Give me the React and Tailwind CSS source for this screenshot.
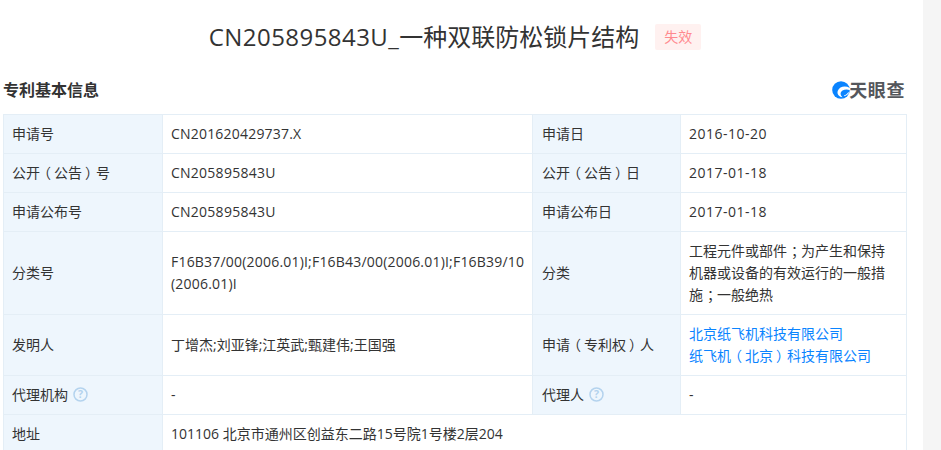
const F = "font-['Open_Sans','Noto_Sans_CJK_SC',sans-serif]";

function Help() {
  return (
    <svg width="15" height="15" viewBox="0 0 15 15" className="ml-[5px] inline-block align-[-2px]">
      <circle cx="7.5" cy="7.5" r="6.5" fill="none" stroke="#b4d3ee" strokeWidth="1.5" />
      <text x="7.5" y="11.2" textAnchor="middle" fontSize="10.500" fontWeight="700" fill="#b4d3ee" fontFamily="Open Sans, sans-serif">?</text>
    </svg>
  );
}

const LP = () => <span className="ml-[-3px] mr-[3px]">（</span>;
const RP = () => <span className="ml-[3px] mr-[-3px]">）</span>;
const Semi = () => <span className="ml-[4px] mr-[-4px]">；</span>;

const L = ({ children, first }) => (
  <td className={`border border-[#e4eef6] bg-[#eef6fd] py-0 align-middle ${first ? "px-[8px]" : "px-[9px]"}`}>{children}</td>
);
const V = ({ children, colSpan }) => (
  <td colSpan={colSpan} className="border border-[#e4eef6] px-[8px] py-0 align-middle">{children}</td>
);

const rows = [
  ["申请号", <span className="tracking-[0.2px]">CN201620429737.X</span>, "申请日", "2016-10-20"],
  [<>公开<LP />公告<RP />号</>, <span className="tracking-[0.25px]">CN205895843U</span>, <>公开<LP />公告<RP />日</>, "2017-01-18"],
  ["申请公布号", <span className="tracking-[0.25px]">CN205895843U</span>, "申请公布日", "2017-01-18"],
];

export default function App() {
  return (
    <div className={`${F} flex h-[450px] w-[941px] overflow-hidden bg-white text-[14px] text-[#333333]`}>
      <main className="w-[923px] shrink-0 pl-[3px] pr-[16px]">
        <div className="flex h-[73px] items-center justify-center gap-[16px]">
          <h1 className="text-[24px] leading-[32px] font-normal text-[#333333]">
            <span className="tracking-[0.45px]">CN205895843U_</span>一种双联防松锁片结构
          </h1>
          <span className="flex h-[26px] w-[46px] items-center justify-center rounded-[2px] bg-[#fff1f0] text-[14px] text-[#ff8a8f]">失效</span>
        </div>
        <div className="flex h-[33px] items-center justify-between pr-[2px]">
          <h2 className="text-[16px] font-bold text-[#333333]">专利基本信息</h2>
          <div className="flex items-center">
            <svg width="18" height="18" viewBox="0 0 18 18">
              <circle cx="9" cy="9" r="8.800" fill="#0a84ff" />
              <path d="M18 7C13 4.300 7.500 5.600 5.800 9.800 4.600 13 6.800 15.900 10.500 16.200 8 14.300 8 11.200 10.500 9.600 12.700 8.300 15.500 8.200 18 9.200z" fill="#ffffff" />
              <path d="M12 14.500c1.800-.6 3.300-1.800 4.300-3.500l.7 1c-1 1.500-2.800 2.900-5 3.300z" fill="#ffffff" />
            </svg>
            <span className="ml-[-1px] text-[18px] leading-[20px] font-bold tracking-[0.6px] text-[#54575c]">天眼查</span>
          </div>
        </div>
        <div className="h-[8px]" />
        <table className="w-[903px] table-fixed border-collapse leading-[22px]">
          <colgroup>
            <col className="w-[159px]" />
            <col className="w-[370px]" />
            <col className="w-[148px]" />
            <col className="w-[226px]" />
          </colgroup>
          <tbody>
            {rows.map((r, i) => (
              <tr key={i} className="h-[39px]">
                <L first>{r[0]}</L>
                <V>{r[1]}</V>
                <L>{r[2]}</L>
                <V><span className="tracking-[0.5px]">{r[3]}</span></V>
              </tr>
            ))}
            <tr className="h-[83px]">
              <L first>分类号</L>
              <V><span className="tracking-[0.2px]">F16B37/00(2006.01)I;F16B43/00(2006.01)I;F16B39/10<wbr />(2006.01)I</span></V>
              <L>分类</L>
              <V>工程元件或部件<Semi />为产生和保持机器或设备的有效运行的一般措施<Semi />一般绝热</V>
            </tr>
            <tr className="h-[61px]">
              <L first>发明人</L>
              <V>丁增杰;刘亚锋;江英武;甄建伟;王国强</V>
              <L>申请<LP />专利权<RP />人</L>
              <V>
                <div className="text-[#0a84ff]">北京纸飞机科技有限公司</div>
                <div className="text-[#0a84ff]">纸飞机<LP />北京<RP />科技有限公司</div>
              </V>
            </tr>
            <tr className="h-[39px]">
              <L first>代理机构<Help /></L>
              <V>-</V>
              <L>代理人<Help /></L>
              <V>-</V>
            </tr>
            <tr className="h-[39px]">
              <L first>地址</L>
              <V colSpan={3}>101106 北京市通州区创益东二路15号院1号楼2层204</V>
            </tr>
          </tbody>
        </table>
      </main>
      <div className="w-[18px] shrink-0 bg-[#f5f5f5]" />
    </div>
  );
}
